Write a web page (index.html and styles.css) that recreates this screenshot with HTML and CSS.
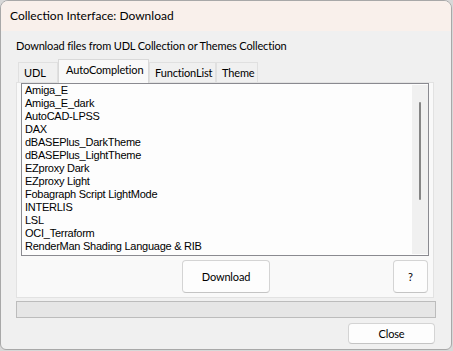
FILE: index.html
```html
<!DOCTYPE html>
<html>
<head>
<meta charset="utf-8">
<link rel="stylesheet" href="styles.css">
</head>
<body>
<div class="window">
  <div class="titlebar">Collection Interface: Download</div>
  <div class="content">
    <div class="label">Download files from UDL Collection or Themes Collection</div>
    <div class="tabs">
      <div class="tab tab-udl">UDL</div>
      <div class="tab tab-auto selected">AutoCompletion</div>
      <div class="tab tab-func">FunctionList</div>
      <div class="tab tab-theme">Theme</div>
    </div>
    <div class="pane">
      <div class="list">
        <div class="items">
          <div class="item">Amiga_E</div>
          <div class="item">Amiga_E_dark</div>
          <div class="item">AutoCAD-LPSS</div>
          <div class="item">DAX</div>
          <div class="item">dBASEPlus_DarkTheme</div>
          <div class="item">dBASEPlus_LightTheme</div>
          <div class="item">EZproxy Dark</div>
          <div class="item">EZproxy Light</div>
          <div class="item">Fobagraph Script LightMode</div>
          <div class="item">INTERLIS</div>
          <div class="item">LSL</div>
          <div class="item">OCI_Terraform</div>
          <div class="item">RenderMan Shading Language &amp; RIB</div>
        </div>
        <div class="scrollbar"><div class="thumb"></div></div>
      </div>
      <div class="buttons">
        <div class="btn btn-download">Download</div>
        <div class="btn btn-help">?</div>
      </div>
    </div>
    <div class="progress"></div>
    <div class="footer">
      <div class="btn btn-close">Close</div>
    </div>
  </div>
</div>
</body>
</html>
```
FILE: styles.css
```css
html, body {
  margin: 0;
  padding: 0;
}
body {
  background: #d8d8d8;
  width: 453px;
  height: 351px;
  overflow: hidden;
  font-family: "Lato", "Noto Sans", sans-serif;
  font-size: 11px;
  letter-spacing: -0.15px;
  color: #000;
}
.window {
  width: 452px;
  height: 350px;
  box-sizing: border-box;
  border: 1px solid #a8a8a8;
  border-radius: 8px 8px 6px 6px;
  background: #f0f0f0;
  overflow: hidden;
  display: flex;
  flex-direction: column;
}
.titlebar {
  height: 30px;
  flex: none;
  background: #f9f0eb;
  padding-left: 9px;
  display: flex;
  align-items: center;
  font-size: 12px;
  letter-spacing: 0;
  line-height: 16px;
}
.content {
  padding: 7px 15px 0 15px;
  display: flex;
  flex-direction: column;
}
.label {
  height: 16px;
  line-height: 16px;
  margin-bottom: 5px;
}
.tabs {
  display: flex;
  align-items: flex-end;
  padding-left: 2px;
  height: 23px;
  position: relative;
  z-index: 1;
}
.tab {
  box-sizing: border-box;
  height: 20px;
  border: 1px solid #e0e0e0;
  border-bottom: none;
  background: #f0f0f0;
  line-height: 19px;
  padding-left: 5px;
  white-space: nowrap;
  overflow: hidden;
}
.tab-udl { width: 40px; }
.tab-auto { width: 91px; }
.tab-func { width: 67px; }
.tab-theme { width: 42px; }
.tab.selected {
  height: 24px;
  margin-bottom: -1px;
  background: #f9f9f9;
  border-color: #d9d9d9;
  padding-left: 7px;
  line-height: 19px;
}
.pane {
  width: 418px;
  height: 216px;
  box-sizing: border-box;
  border: 1px solid #e2e2e2;
  background: #f9f9f9;
  padding: 0 4px 4px 4px;
  display: flex;
  flex-direction: column;
}
.list {
  height: 174px;
  box-sizing: border-box;
  border: 1px solid #8a8a90;
  background: #fdfdfd;
  display: flex;
  font-family: "Liberation Sans", Arial, sans-serif;
  font-size: 11px;
  letter-spacing: -0.25px;
}
.items {
  flex: 1;
  padding-left: 3px;
}
.item {
  height: 13px;
  line-height: 13px;
  white-space: nowrap;
}
.scrollbar {
  width: 16px;
  margin: 1px 0 1px 0;
  background: #f0f0f0;
  display: flex;
  justify-content: center;
  padding-top: 17px;
  box-sizing: border-box;
}
.thumb {
  width: 2px;
  height: 98px;
  background: #858585;
  border-radius: 1px;
}
.buttons {
  margin-top: 4px;
  display: flex;
  justify-content: space-between;
  padding-left: 161px;
  padding-right: 1px;
}
.btn {
  box-sizing: border-box;
  background: #fdfdfd;
  border: 1px solid #d4d4d4;
  border-bottom-color: #c4c4c4;
  border-radius: 4px;
  display: flex;
  align-items: center;
  justify-content: center;
}
.btn-download {
  width: 88px;
  height: 33px;
}
.btn-help {
  width: 35px;
  height: 33px;
}
.progress {
  margin-top: 3px;
  width: 420px;
  height: 17px;
  box-sizing: border-box;
  background: #e6e6e6;
  border: 1px solid #bcbcbc;
}
.footer {
  display: flex;
  justify-content: flex-end;
  padding-right: 1px;
  margin-top: 5px;
}
.btn-close {
  width: 87px;
  height: 21px;
}
```
